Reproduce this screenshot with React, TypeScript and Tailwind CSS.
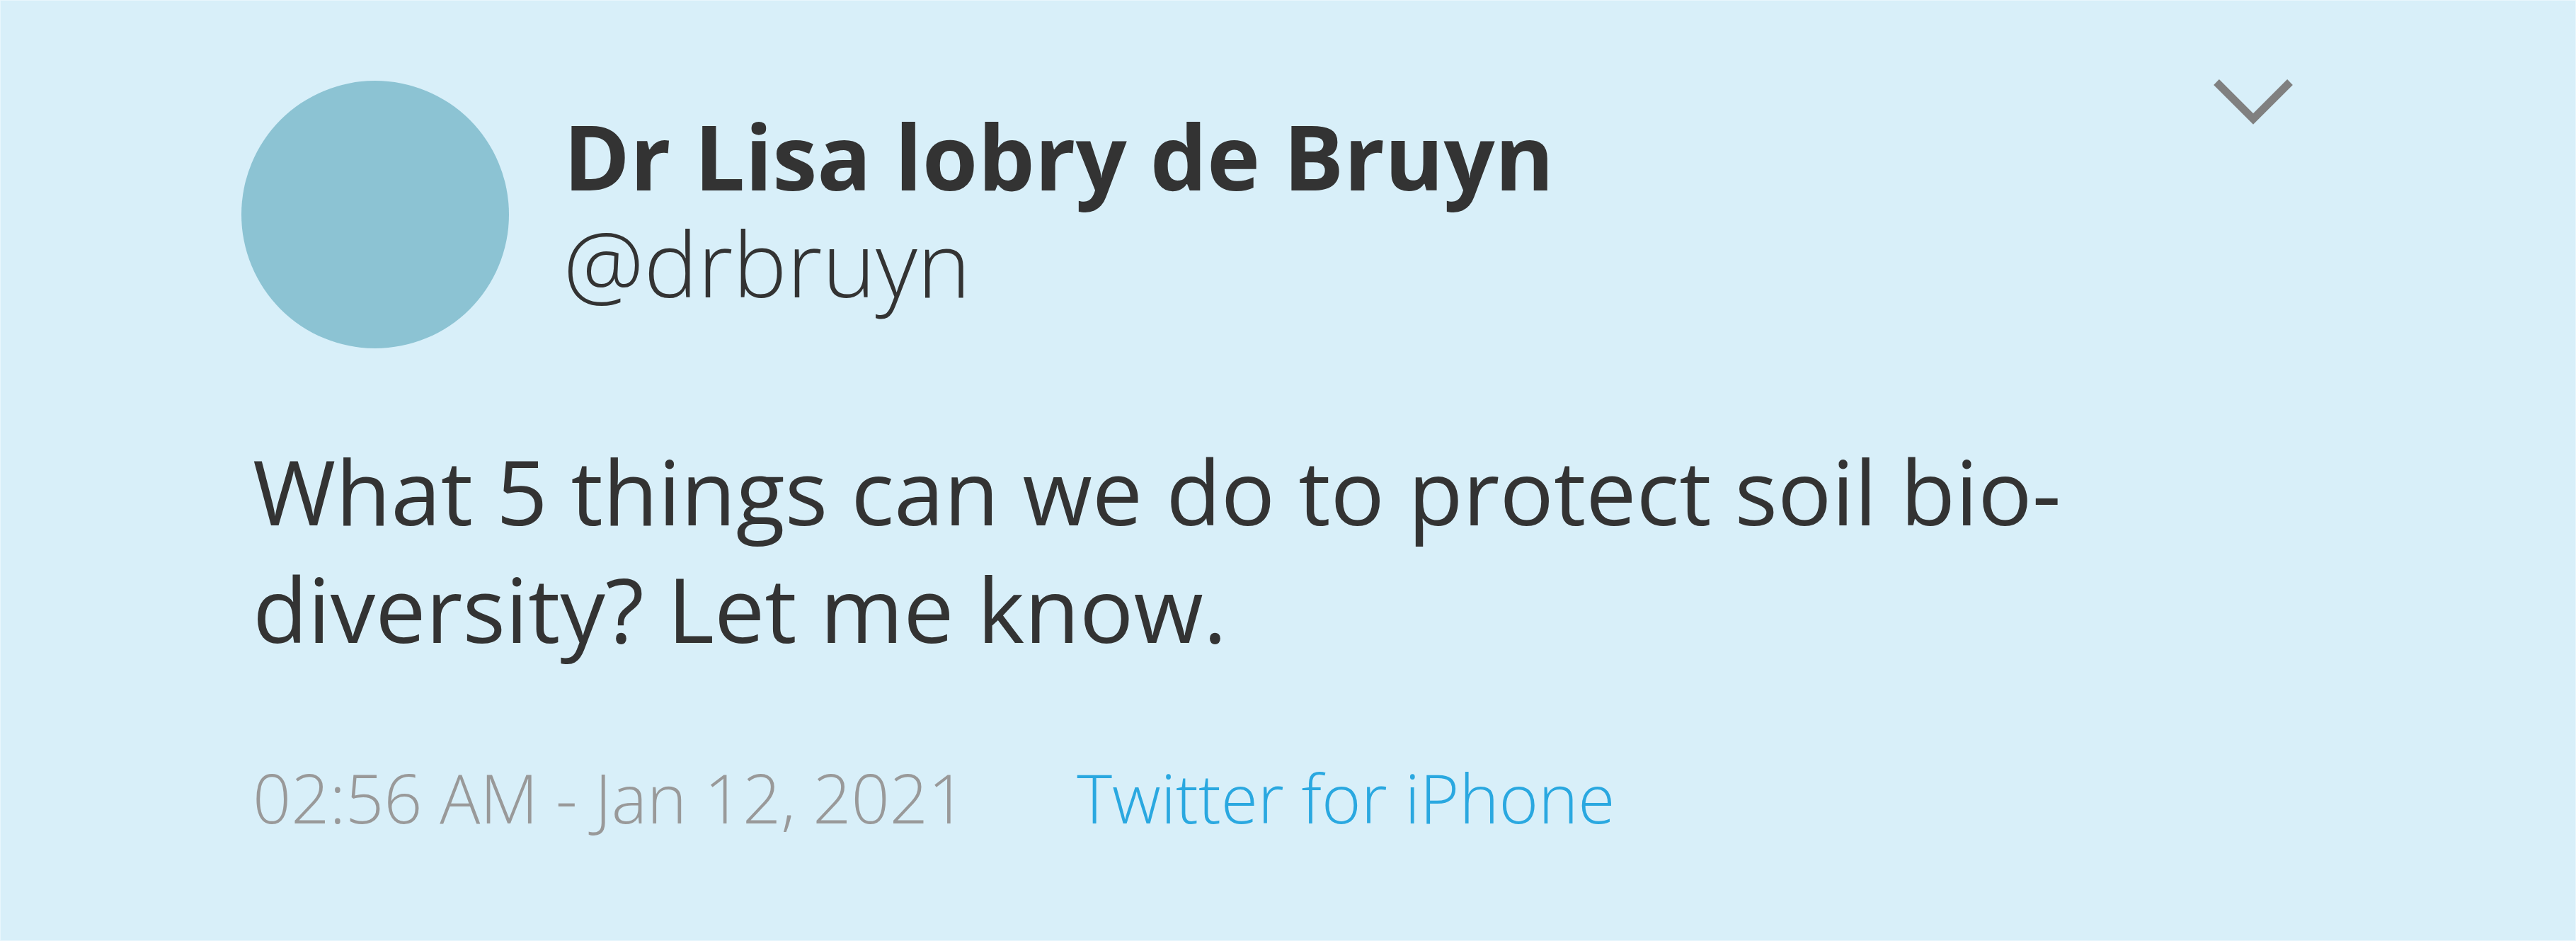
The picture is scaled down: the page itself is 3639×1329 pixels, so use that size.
export default function App() {
  return (
    <div
      className="w-full h-[1329px] bg-[#d8eff9] border border-[#e9f6fc] text-[#333333] pl-[340px] pr-[399px] pt-[113px]"
      style={{ fontFamily: '"Open Sans", "Liberation Sans", sans-serif' }}
    >
      {/* Header */}
      <div className="flex items-start">
        <div className="w-[378px] h-[378px] rounded-full bg-[#8cc3d3] shrink-0" />
        <div className="ml-[74px] mt-[30px] pl-[3px]">
          <div className="text-[127px] leading-[151px] font-bold whitespace-nowrap">Dr Lisa lobry de Bruyn</div>
          <div className="text-[128px] leading-[151px] font-light whitespace-nowrap">@drbruyn</div>
        </div>
        <button className="ml-auto mt-[-2px] text-[#808080]">
          <svg width="112" height="66" viewBox="0 0 112 66" fill="none">
            <path d="M4 4 L56 56 L108 4" stroke="currentColor" strokeWidth="11" strokeLinecap="butt" />
          </svg>
        </button>
      </div>

      {/* Body */}
      <p className="mt-[118px] pl-[16px] text-[127px] leading-[166px] font-normal max-w-[2650px]">
        What 5 things can we do to protect soil bio-diversity? Let me know.
      </p>

      {/* Meta */}
      <div className="mt-[136px] pl-[16px] flex items-center gap-[156px] text-[95px] leading-[96px] font-light">
        <span className="text-[#999999]">02:56 AM - Jan 12, 2021</span>
        <span className="text-[#2aa8e0]">Twitter for iPhone</span>
      </div>
    </div>
  );
}
